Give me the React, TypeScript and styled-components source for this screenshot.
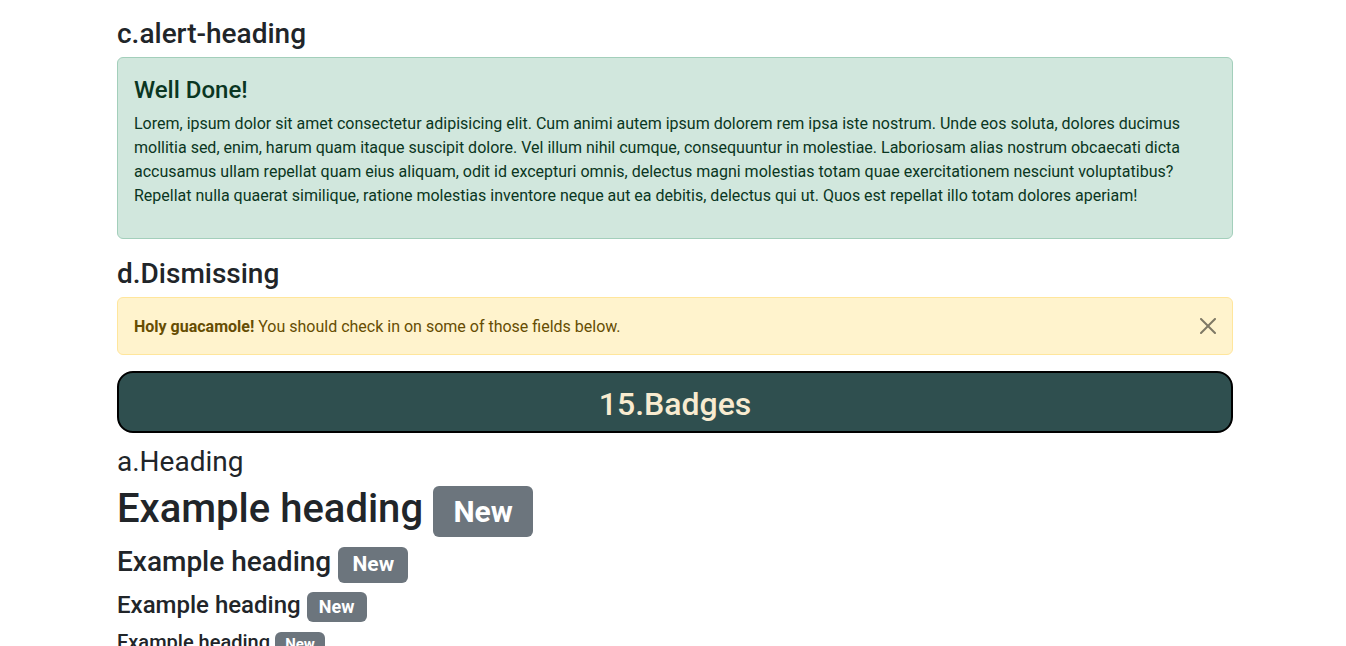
import React from "react";
import styled, { createGlobalStyle, css } from "styled-components";

const GlobalStyle = createGlobalStyle`
  *, *::before, *::after { box-sizing: border-box; }
  html, body { margin: 0; padding: 0; background: #fff; }
  body {
    font-family: Roboto, "Liberation Sans", sans-serif;
    font-size: 16px;
    line-height: 1.5;
    color: #212529;
    overflow: hidden;
  }
`;

const Page = styled.main`
  padding: 15px 0 0 117px;
`;

const Container = styled.div`
  width: 1116px;
  display: flex;
  flex-direction: column;
`;

const SectionTitle = styled.h3<{ $light?: boolean }>`
  margin: 0 0 6px;
  padding-top: 2px;
  font-size: 28px;
  line-height: 1.2;
  font-weight: ${(p) => (p.$light ? 400 : 500)};
`;

const variants = {
  success: css`
    background: #d1e7dd;
    border-color: #a3cfbb;
    color: #0a3622;
  `,
  warning: css`
    background: #fff3cd;
    border-color: #ffe69c;
    color: #664d03;
  `,
};

const Alert = styled.div<{ $variant: keyof typeof variants }>`
  border: 1px solid transparent;
  border-radius: 6px;
  padding: 16px;
  margin-bottom: 16px;
  ${(p) => variants[p.$variant]}
`;

const DismissibleAlert = styled(Alert)`
  display: flex;
  align-items: center;
  gap: 16px;
  padding: 17px 16px 15px;
`;

const AlertHeading = styled.h4`
  margin: 0 0 7px;
  padding-top: 2px;
  font-size: 24px;
  line-height: 1.2;
  font-weight: 500;
  color: inherit;
`;

const AlertText = styled.p`
  margin: 0 0 14px;
  padding-top: 1px;
`;

const AlertMessage = styled.div`
  flex: 1;
`;

const Strong = styled.strong`
  font-weight: 700;
`;

const CloseButton = styled.button`
  width: 16px;
  height: 16px;
  padding: 0;
  margin-top: -2px;
  border: 0;
  background: transparent;
  opacity: 0.5;
  cursor: pointer;
  display: flex;
  align-items: center;
  justify-content: center;
  svg { display: block; }
`;

const Banner = styled.div`
  background: #2f4f4f;
  border: 2px solid #000;
  border-radius: 16px;
  padding: 12px 0 8px;
  margin-bottom: 10px;
  text-align: center;
  color: #f8ebd0;
  font-size: 32px;
  line-height: 1.2;
  font-weight: 500;
`;

const ExampleHeading = styled.div<{ $size: number }>`
  margin: 0 0 8px;
  font-size: ${(p) => p.$size}px;
  line-height: 1.2;
  font-weight: 500;
`;

const Badge = styled.span`
  display: inline-block;
  padding: 0.35em 0.68em;
  font-size: 0.75em;
  font-weight: 700;
  line-height: 1;
  color: #fff;
  text-align: center;
  white-space: nowrap;
  vertical-align: baseline;
  border-radius: 6px;
  background: #6c757d;
`;

const headings: { tag: "h1" | "h3" | "h4" | "h5"; size: number }[] = [
  { tag: "h1", size: 40 },
  { tag: "h3", size: 28 },
  { tag: "h4", size: 24 },
  { tag: "h5", size: 20 },
];

export default function App() {
  return (
    <>
      <GlobalStyle />
      <Page>
        <Container>
          <SectionTitle>c.alert-heading</SectionTitle>
          <Alert $variant="success" role="alert">
            <AlertHeading>Well Done!</AlertHeading>
            <AlertText>
              Lorem, ipsum dolor sit amet consectetur adipisicing elit. Cum animi autem ipsum dolorem rem ipsa iste
              nostrum. Unde eos soluta, dolores ducimus mollitia sed, enim, harum quam itaque suscipit dolore. Vel
              illum nihil cumque, consequuntur in molestiae. Laboriosam alias nostrum obcaecati dicta accusamus ullam
              repellat quam eius aliquam, odit id excepturi omnis, delectus magni molestias totam quae exercitationem
              nesciunt voluptatibus? Repellat nulla quaerat similique, ratione molestias inventore neque aut ea
              debitis, delectus qui ut. Quos est repellat illo totam dolores aperiam!
            </AlertText>
          </Alert>

          <SectionTitle>d.Dismissing</SectionTitle>
          <DismissibleAlert $variant="warning" role="alert">
            <AlertMessage>
              <Strong>Holy guacamole!</Strong> You should check in on some of those fields below.
            </AlertMessage>
            <CloseButton type="button" aria-label="Close">
              <svg width="16" height="16" viewBox="0 0 16 16" fill="#000">
                <path d="M.293.293a1 1 0 0 1 1.414 0L8 6.586 14.293.293a1 1 0 1 1 1.414 1.414L9.414 8l6.293 6.293a1 1 0 0 1-1.414 1.414L8 9.414l-6.293 6.293a1 1 0 0 1-1.414-1.414L6.586 8 .293 1.707a1 1 0 0 1 0-1.414" />
              </svg>
            </CloseButton>
          </DismissibleAlert>

          <Banner>15.Badges</Banner>

          <SectionTitle $light>a.Heading</SectionTitle>
          {headings.map((h) => (
            <ExampleHeading key={h.tag} as={h.tag} $size={h.size}>
              Example heading <Badge>New</Badge>
            </ExampleHeading>
          ))}
        </Container>
      </Page>
    </>
  );
}
